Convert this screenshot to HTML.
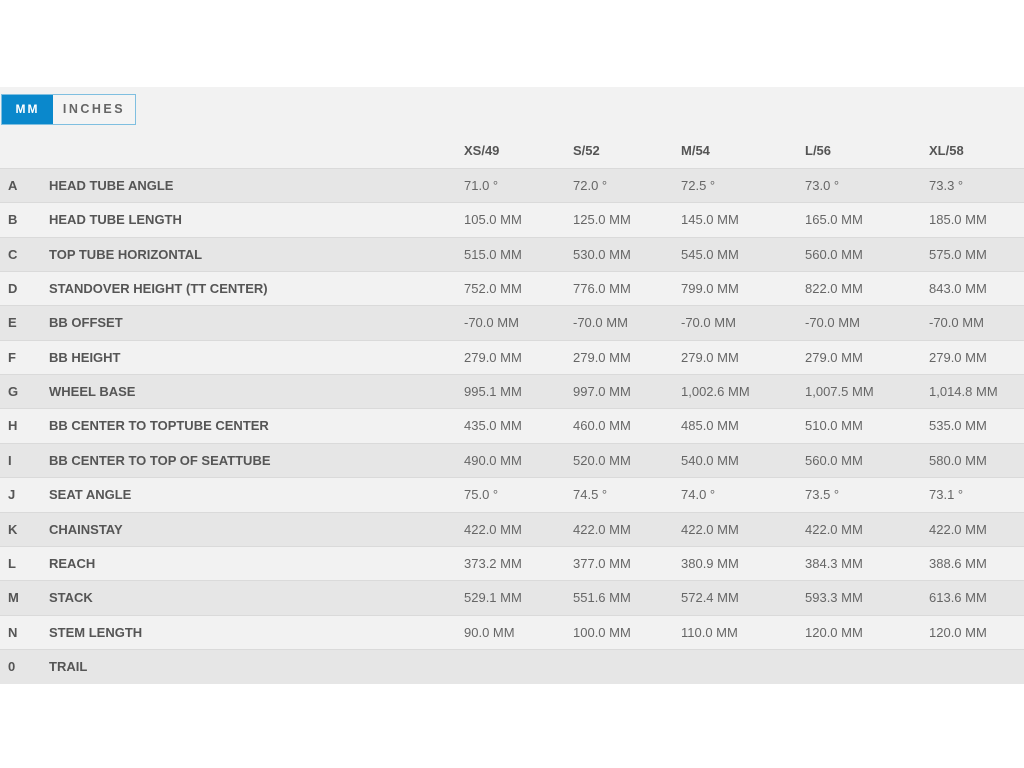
<!DOCTYPE html><html><head><style>
body{margin:0;background:#fff;font-family:"Liberation Sans",sans-serif;}
.panel{position:absolute;left:0;top:87px;width:1024px;height:596px;background:#f2f2f2;}
.tog{position:absolute;left:1px;top:94px;width:133px;height:29px;border:1px solid #7fbfe0;background:#f4f4f4;}
.tog .mm{position:absolute;left:0;top:0;width:51px;height:29px;background:#0a88cc;color:#fff;font-weight:bold;font-size:12px;letter-spacing:2px;line-height:29px;text-align:center}
.tog .in{position:absolute;left:51px;top:0;width:82px;height:29px;color:#666;font-weight:bold;font-size:12.5px;letter-spacing:2.5px;line-height:29px;text-align:center}
.row{position:absolute;left:0;width:1024px;height:34px;border-top:1px solid #dadada;font-size:13px;line-height:34px;color:#666}
.row.d{background:#e6e6e6}
.row span{position:absolute;top:0}
.b{font-weight:bold;color:#555}
</style></head><body>
<div class="panel"></div>
<div class="tog"><div class="mm">MM</div><div class="in">INCHES</div></div>
<div class="row" style="top:134px;border-top:none"><span class="b" style="left:464px">XS/49</span><span class="b" style="left:573px">S/52</span><span class="b" style="left:681px">M/54</span><span class="b" style="left:805px">L/56</span><span class="b" style="left:929px">XL/58</span></div>
<div id="rows"></div>
<script>
var d=[["A","HEAD TUBE ANGLE","71.0 °","72.0 °","72.5 °","73.0 °","73.3 °"],
["B","HEAD TUBE LENGTH","105.0 MM","125.0 MM","145.0 MM","165.0 MM","185.0 MM"],
["C","TOP TUBE HORIZONTAL","515.0 MM","530.0 MM","545.0 MM","560.0 MM","575.0 MM"],
["D","STANDOVER HEIGHT (TT CENTER)","752.0 MM","776.0 MM","799.0 MM","822.0 MM","843.0 MM"],
["E","BB OFFSET","-70.0 MM","-70.0 MM","-70.0 MM","-70.0 MM","-70.0 MM"],
["F","BB HEIGHT","279.0 MM","279.0 MM","279.0 MM","279.0 MM","279.0 MM"],
["G","WHEEL BASE","995.1 MM","997.0 MM","1,002.6 MM","1,007.5 MM","1,014.8 MM"],
["H","BB CENTER TO TOPTUBE CENTER","435.0 MM","460.0 MM","485.0 MM","510.0 MM","535.0 MM"],
["I","BB CENTER TO TOP OF SEATTUBE","490.0 MM","520.0 MM","540.0 MM","560.0 MM","580.0 MM"],
["J","SEAT ANGLE","75.0 °","74.5 °","74.0 °","73.5 °","73.1 °"],
["K","CHAINSTAY","422.0 MM","422.0 MM","422.0 MM","422.0 MM","422.0 MM"],
["L","REACH","373.2 MM","377.0 MM","380.9 MM","384.3 MM","388.6 MM"],
["M","STACK","529.1 MM","551.6 MM","572.4 MM","593.3 MM","613.6 MM"],
["N","STEM LENGTH","90.0 MM","100.0 MM","110.0 MM","120.0 MM","120.0 MM"],
["0","TRAIL","","","","",""]];
var x=[8,49,464,573,681,805,929],h="";
d.forEach(function(r,i){h+='<div class="row'+(i%2==0?' d':'')+'" style="top:'+(168+i*34.35)+'px">';
r.forEach(function(c,j){h+='<span class="'+(j<2?'b':'')+'" style="left:'+x[j]+'px">'+c+'</span>';});h+='</div>';});
document.getElementById('rows').innerHTML=h;
</script>
</body></html>
